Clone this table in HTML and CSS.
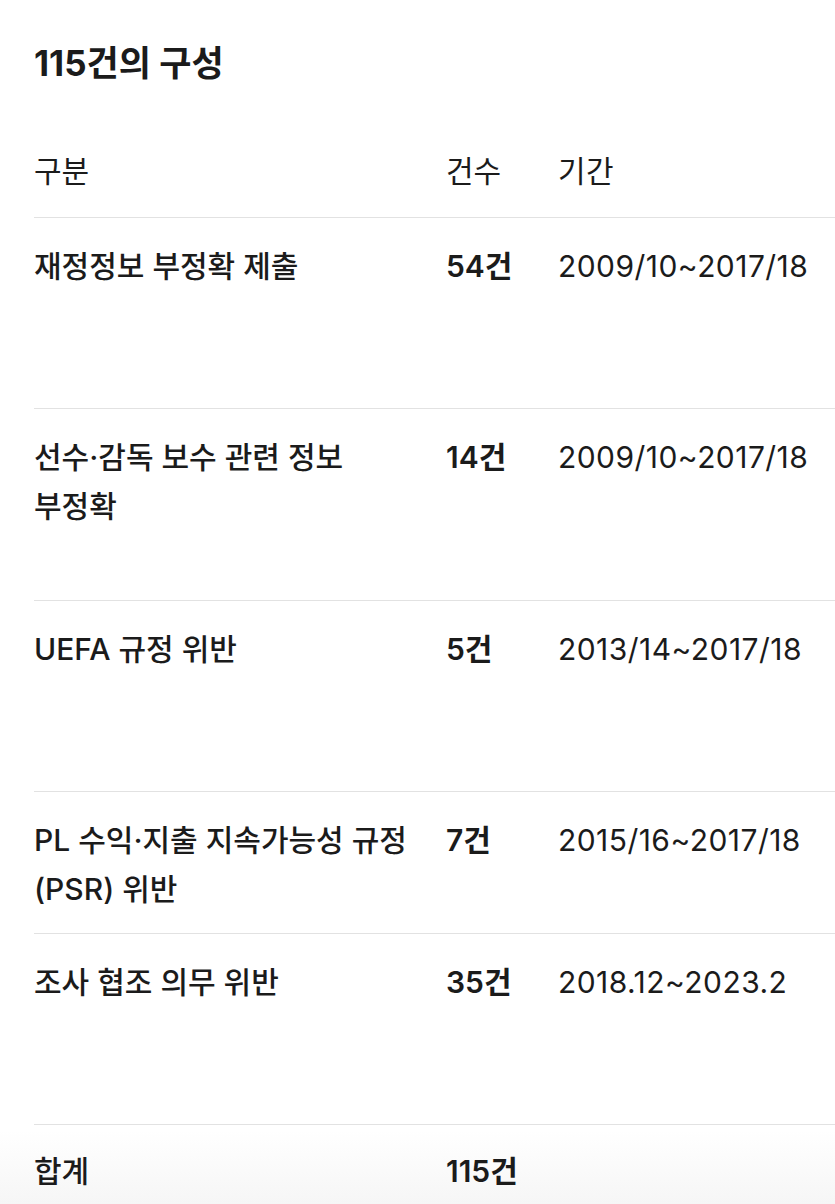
FILE: index.html
```html
<!DOCTYPE html>
<html lang="ko">
<head>
<meta charset="utf-8">
<link rel="stylesheet" href="styles.css">
</head>
<body>
<main class="page">
  <h2 class="title">115건의 구성</h2>
  <div class="table">
    <div class="row head">
      <div class="c1">구분</div>
      <div class="c2">건수</div>
      <div class="c3">기간</div>
    </div>
    <div class="row">
      <div class="c1">재정정보 부정확 제출</div>
      <div class="c2">54건</div>
      <div class="c3">2009/10~2017/18</div>
    </div>
    <div class="row">
      <div class="c1">선수·감독 보수 관련 정보 부정확</div>
      <div class="c2">14건</div>
      <div class="c3">2009/10~2017/18</div>
    </div>
    <div class="row">
      <div class="c1">UEFA 규정 위반</div>
      <div class="c2">5건</div>
      <div class="c3">2013/14~2017/18</div>
    </div>
    <div class="row compact">
      <div class="c1">PL 수익·지출 지속가능성 규정 (PSR) 위반</div>
      <div class="c2">7건</div>
      <div class="c3">2015/16~2017/18</div>
    </div>
    <div class="row">
      <div class="c1">조사 협조 의무 위반</div>
      <div class="c2">35건</div>
      <div class="c3">2018.12~2023.2</div>
    </div>
    <div class="row total">
      <div class="c1">합계</div>
      <div class="c2">115건</div>
      <div class="c3"></div>
    </div>
  </div>
</main>
</body>
</html>
```
FILE: styles.css
```css
html, body {
  margin: 0;
  padding: 0;
  background: #ffffff;
}
body {
  font-family: Inter, "Noto Sans CJK KR", "Noto Sans", sans-serif;
  color: #1b1b1b;
  min-height: 1204px;
  background: linear-gradient(to bottom, #ffffff 0, #ffffff 1130px, #f6f6f6 1204px);
  word-break: keep-all;
}
.page {
  padding: 43px 0 0 34px;
}
.title {
  margin: 0;
  font-size: 35px;
  line-height: 40px;
  font-weight: 700;
  letter-spacing: 0;
}
.table {
  margin-top: 64px;
}
.row {
  display: grid;
  grid-template-columns: 412px 112px 1fr;
  font-size: 30px;
  line-height: 49px;
  min-height: 191.3px;
  box-sizing: border-box;
  padding: 24px 0 20px;
  border-bottom: 1px solid #e2e2e2;
}
.row.head {
  min-height: 0;
  padding: 0 0 21px;
  height: 71px;
}
.row.head .c1, .row.head .c2, .row.head .c3 {
  font-weight: 400;
}
.row.compact {
  min-height: 0;
  padding-bottom: 19px;
}
.row.total {
  border-bottom: none;
  min-height: 0;
  padding-top: 22px;
}
.c1 {
  font-weight: 500;
  padding-right: 30px;
}
.c2 {
  font-weight: 600;
}
.c3 {
  font-weight: 400;
  letter-spacing: 0.45px;
}
```
